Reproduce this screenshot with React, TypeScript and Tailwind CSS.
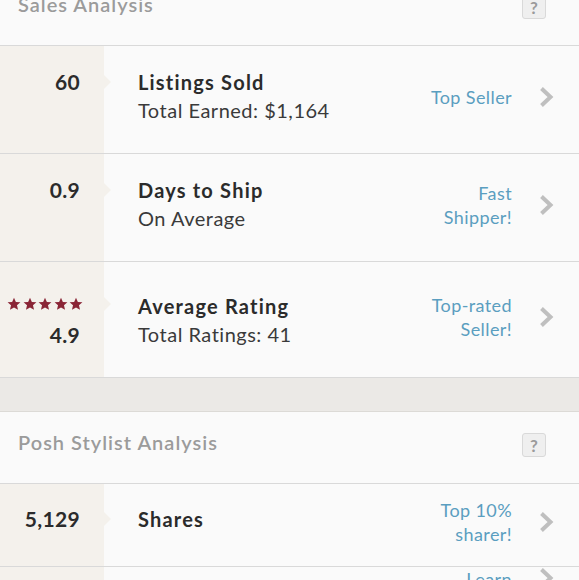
import type { ReactNode } from 'react';

// ── Data ───────────────────────────────────────────────────────────────────

interface StatRow {
  value: string;
  title: string;
  subtitle?: string;
  badge: string[];
  stars?: boolean;
  height: string;
}

const SALES_ROWS: StatRow[] = [
  { value: '60', title: 'Listings Sold', subtitle: 'Total Earned: $1,164', badge: ['Top Seller'], height: 'h-[108px]' },
  { value: '0.9', title: 'Days to Ship', subtitle: 'On Average', badge: ['Fast', 'Shipper!'], height: 'h-[108px]' },
  { value: '4.9', title: 'Average Rating', subtitle: 'Total Ratings: 41', badge: ['Top-rated', 'Seller!'], stars: true, height: 'h-[116px]' },
];

// ── Small pieces ───────────────────────────────────────────────────────────

function Chevron() {
  return (
    <svg width="15" height="22" viewBox="0 0 15 22" fill="none" stroke="#bfbfbf" strokeWidth="4" strokeLinejoin="miter">
      <polyline points="2.5 2.5 11.5 11 2.5 19.5" />
    </svg>
  );
}

function Star() {
  return (
    <svg width="14" height="14" viewBox="0 0 24 24" fill="#8a2536">
      <path d="M12 1.2l3.2 7.2 7.8.7-5.9 5.2 1.8 7.7L12 18l-6.9 4 1.8-7.7L1 9.1l7.8-.7z" />
    </svg>
  );
}

function HelpBox() {
  return (
    <div className="w-6 h-6 rounded-[3px] border border-[#d9d9d9] bg-[#efefef] flex items-center justify-center text-[17px] font-bold text-[#9a9a9a] leading-none">
      ?
    </div>
  );
}

function SectionHeader({ label, className = '' }: { label: string; className?: string }) {
  return (
    <div className={`h-[72px] flex items-start justify-between pl-[18px] pr-[33px] border-b border-[#d9d9d9] ${className}`}>
      <span className="mt-[16px] text-[20px] leading-[28px] text-[#9b9b9b] font-semibold tracking-[1px]">{label}</span>
      <div className="mt-[21px]">
        <HelpBox />
      </div>
    </div>
  );
}

function Row({ left, children, badge, height, rightClass = '' }: { left: ReactNode; children: ReactNode; badge: string[]; height: string; rightClass?: string }) {
  return (
    <div className={`flex border-b border-[#d9d9d9] ${height}`}>
      <div className="relative w-[104px] shrink-0 bg-[#f4f1ec]">
        {left}
      </div>
      <div className="flex-1 flex justify-between pl-[34px] pr-[25px]">
        <div>{children}</div>
        <div className={`flex items-center gap-[27px] ${rightClass}`}>
          <div className="text-right text-[18px] leading-[24px] tracking-[0.4px] text-[#5a9ec0]">
            {badge.map((b) => (
              <div key={b}>{b}</div>
            ))}
          </div>
          <Chevron />
        </div>
      </div>
    </div>
  );
}

function Notch({ top }: { top: string }) {
  return (
    <div
      className={`absolute right-[-7px] ${top} w-0 h-0 border-y-[7px] border-y-transparent border-l-[7px] border-l-[#f4f1ec]`}
    />
  );
}

// ── App ────────────────────────────────────────────────────────────────────

export default function App() {
  return (
    <div
      className="w-[579px] h-[580px] overflow-hidden bg-[#fafafa] text-[#2b2b2b]"
      style={{ fontFamily: 'Lato, "Open Sans", sans-serif' }}
    >
      <SectionHeader label="Sales Analysis" className="-mt-[26px]" />

      {SALES_ROWS.map((r) => (
        <Row
          key={r.title}
          height={r.height}
          badge={r.badge}
          rightClass="-mt-[6px]"
          left={
            r.stars ? (
              <>
                <div className="pt-[35px] pl-[7px] flex gap-[1.5px]">
                  {[0, 1, 2, 3, 4].map((i) => (
                    <Star key={i} />
                  ))}
                </div>
                <div className="mt-[10px] pr-[24px] text-right text-[21px] leading-[28px] font-bold tracking-[0.3px]">{r.value}</div>
                <Notch top="top-[35px]" />
              </>
            ) : (
              <>
                <div className="pt-[22px] pr-[24px] text-right text-[21px] leading-[28px] font-bold tracking-[0.3px]">{r.value}</div>
                <Notch top="top-[29px]" />
              </>
            )
          }
        >
          <div className={r.stars ? 'pt-[30px]' : 'pt-[22px]'}>
            <div className="text-[20px] leading-[28px] font-bold tracking-[1.2px]">{r.title}</div>
            <div className="text-[20px] leading-[28px] text-[#3a3a3a] tracking-[0.5px]">{r.subtitle}</div>
          </div>
        </Row>
      ))}

      <div className="h-[34px] bg-[#ebe9e6] border-b border-[#dcdad6]" />

      <SectionHeader label="Posh Stylist Analysis" />

      <Row
        height="h-[83px]"
        badge={['Top 10%', 'sharer!']}
        rightClass="-mt-[6px]"
        left={
          <>
            <div className="pt-[21px] pr-[24px] text-right text-[21px] leading-[28px] font-bold tracking-[0.3px]">5,129</div>
            <Notch top="top-[28px]" />
          </>
        }
      >
        <div className="pt-[21px] text-[20px] leading-[28px] font-bold tracking-[1.2px]">Shares</div>
      </Row>

      <Row
        height="h-[83px]"
        badge={['Learn', 'More']}
        rightClass="items-start"
        left={null}
      >
        <div />
      </Row>
    </div>
  );
}
